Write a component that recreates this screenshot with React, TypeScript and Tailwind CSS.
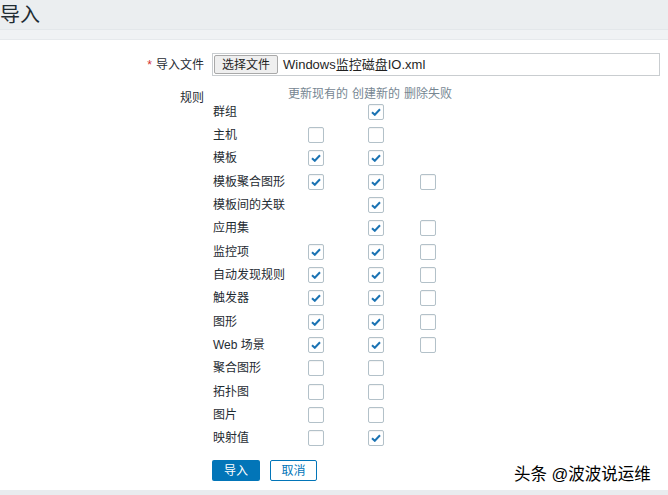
type Cell = boolean | null

const rules: [string, Cell, Cell, Cell][] = [
  ["群组", null, true, null],
  ["主机", false, false, null],
  ["模板", true, true, null],
  ["模板聚合图形", true, true, false],
  ["模板间的关联", null, true, null],
  ["应用集", null, true, false],
  ["监控项", true, true, false],
  ["自动发现规则", true, true, false],
  ["触发器", true, true, false],
  ["图形", true, true, false],
  ["Web 场景", true, true, false],
  ["聚合图形", false, false, null],
  ["拓扑图", false, false, null],
  ["图片", false, false, null],
  ["映射值", false, true, null],
]

const Check = ({ value }: { value: Cell }) => {
  if (value === null) return null
  return (
    <div className="w-[16px] h-[16px] rounded-[2px] border border-[#b3c1c9] bg-white flex items-center justify-center shadow-[inset_0_1px_1px_rgba(0,0,0,0.05)]">
      {value && (
        <svg width="10" height="8" viewBox="0 0 10 8">
          <path d="M1 4.2 L3.8 6.8 L9 1.3" fill="none" stroke="#1b73b3" strokeWidth="2" />
        </svg>
      )}
    </div>
  )
}

export default function App() {
  return (
    <div
      className="relative w-[668px] h-[495px] overflow-hidden bg-white text-[12px] text-[#1f2c33]"
      style={{ fontFamily: '"Liberation Sans", "Noto Sans CJK SC", sans-serif' }}
    >
      <header className="h-[29px] bg-[#ebeef0] flex items-center">
        <h1 className="text-[20px] leading-none text-[#1f2c33]">导入</h1>
      </header>
      <div className="h-[11px] bg-[#f0f2f4] border-t border-[#e3e7ea] border-b border-b-[#e6e9ec]" />

      <form className="grid grid-cols-[204px_1fr] gap-x-[8px] pr-[8px] pt-[13px]">
        <label className="h-[23px] flex items-center justify-end">
          <span className="text-[#d32f2f] mr-[4px]">*</span>导入文件
        </label>
        <div className="h-[23px] border border-[#c9cdd0] flex items-center pl-[1px]">
          <div className="h-[19px] w-[64px] bg-[#efefef] border border-[#a9a9a9] rounded-[2px] flex items-center justify-center text-[#1f1f1f]">
            选择文件
          </div>
          <span className="ml-[5px] text-[13px] text-[#1f1f1f]">Windows监控磁盘IO.xml</span>
        </div>

        <label className="pt-[13px] text-right">规则</label>
        <div className="pt-[9px]">
          <div className="grid grid-cols-[74px_64px_52px_52px] h-[15px] items-center text-[#768692]">
            <span />
            <span className="text-center">更新现有的</span>
            <span className="text-center">创建新的</span>
            <span className="text-center">删除失败</span>
          </div>
          {rules.map(([name, a, b, c]) => (
            <div key={name} className="grid grid-cols-[74px_64px_52px_52px] h-[23.35px] items-center">
              <span className="pl-[1px] whitespace-nowrap">{name}</span>
              <div className="flex justify-center pr-[4px]"><Check value={a} /></div>
              <div className="flex justify-center"><Check value={b} /></div>
              <div className="flex justify-center"><Check value={c} /></div>
            </div>
          ))}
          <div className="flex gap-[10px] mt-[10px]">
            <button type="button" className="w-[48px] h-[21px] rounded-[2px] bg-[#0275b8] text-white">导入</button>
            <button type="button" className="w-[47px] h-[21px] rounded-[2px] border border-[#0275b8] bg-white text-[#0275b8]">取消</button>
          </div>
        </div>
      </form>

      <div className="absolute left-0 right-0 bottom-0 h-[5px] bg-[#e9ecef]" />
      <div
        className="absolute left-[514px] top-[462px] text-[16.5px] text-black"
        style={{ textShadow: "0 0 2px #fff, 0 0 2px #fff" }}
      >
        头条 @波波说运维
      </div>
    </div>
  )
}
